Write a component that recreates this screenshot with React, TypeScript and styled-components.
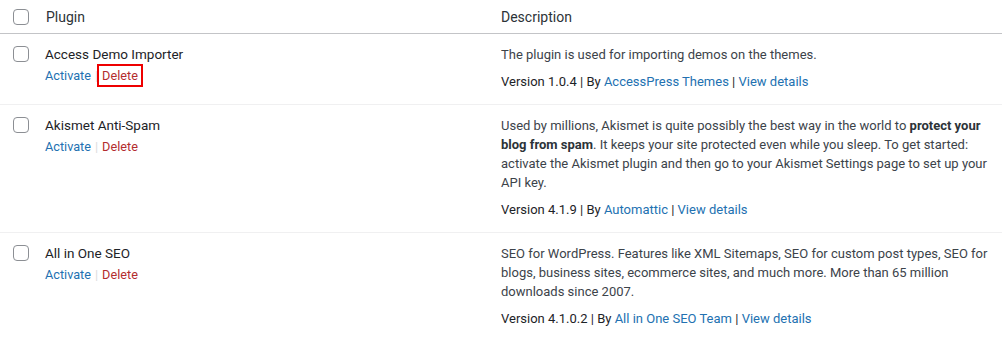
import React from "react";
import styled, { createGlobalStyle } from "styled-components";

const Global = createGlobalStyle`
  html, body { margin: 0; padding: 0; background: #fff; }
  body { font-family: Roboto, "Noto Sans", sans-serif; font-size: 13px; color: #3c434a; }
`;

const Table = styled.table`
  width: 1002px;
  border-collapse: collapse;
  table-layout: fixed;
`;

const HeadCell = styled.th<{ $w?: number }>`
  text-align: left;
  font-weight: 400;
  font-size: 14px;
  line-height: 17px;
  color: #2c3338;
  padding: 9px 10px 7px;
  border-bottom: 1px solid #c3c4c7;
  ${(p) => (p.$w ? `width: ${p.$w}px;` : "")}
`;

const CheckHead = styled.th`
  width: 16px;
  padding: 8px 7px 8px 13px;
  border-bottom: 1px solid #c3c4c7;
  text-align: left;
`;

const Row = styled.tr`
  border-bottom: 1px solid #f0f0f1;
`;

const CheckCell = styled.td`
  vertical-align: top;
  padding: 12px 7px 0 13px;
`;

const Box = styled.span`
  display: block;
  width: 14px;
  height: 14px;
  border: 1px solid #8c8f94;
  border-radius: 4px;
  background: #fff;
`;

const TitleCell = styled.td`
  vertical-align: top;
  padding: 10px 10px 13px 9px;
`;

const Title = styled.div`
  font-size: 13.5px;
  line-height: 21px;
  color: #1d2327;
`;

const Actions = styled.div`
  display: flex;
  align-items: center;
  font-size: 12.7px;
  line-height: 21px;
`;

const Sep = styled.span`
  color: #dcdcde;
  margin: 0 4px 0 4px;
`;

const ActionLink = styled.a<{ $danger?: boolean; $marked?: boolean }>`
  position: relative;
  color: ${(p) => (p.$danger ? "#b32d2e" : "#2271b1")};
  text-decoration: none;
  ${(p) =>
    p.$marked
      ? `&::after {
          content: "";
          position: absolute;
          top: -1px;
          bottom: -1px;
          left: -5px;
          right: -5px;
          border: 2px solid #ee0000;
          box-sizing: border-box;
        }
        &::before {
          content: "";
          position: absolute;
          top: 0; bottom: 0; left: -4px; width: 4px;
          background: #fff;
        }`
      : ""}
`;

const DescCell = styled.td`
  vertical-align: top;
  padding: 11px 10px 13px;
`;

const Para = styled.p`
  margin: 0 0 8px;
  line-height: 19px;
  color: #3c434a;
  strong { font-weight: 700; color: #2c3338; }
`;

const Meta = styled.div`
  line-height: 19px;
  color: #1d2327;
`;

const Link = styled.a`
  color: #2271b1;
  text-decoration: none;
`;

type Plugin = {
  name: string;
  desc: React.ReactNode;
  version: string;
  author: string;
  marked?: boolean;
};

const plugins: Plugin[] = [
  {
    name: "Access Demo Importer",
    desc: "The plugin is used for importing demos on the themes.",
    version: "1.0.4",
    author: "AccessPress Themes",
    marked: true,
  },
  {
    name: "Akismet Anti-Spam",
    desc: (
      <>
        Used by millions, Akismet is quite possibly the best way in the world to{" "}
        <strong>protect your blog from spam</strong>. It keeps your site protected even while you
        sleep. To get started: activate the Akismet plugin and then go to your Akismet Settings page
        to set up your API key.
      </>
    ),
    version: "4.1.9",
    author: "Automattic",
  },
  {
    name: "All in One SEO",
    desc: "SEO for WordPress. Features like XML Sitemaps, SEO for custom post types, SEO for blogs, business sites, ecommerce sites, and much more. More than 65 million downloads since 2007.",
    version: "4.1.0.2",
    author: "All in One SEO Team",
  },
];

export default function App() {
  return (
    <>
      <Global />
      <Table>
        <thead>
          <tr>
            <CheckHead>
              <Box />
            </CheckHead>
            <HeadCell $w={435}>Plugin</HeadCell>
            <HeadCell>Description</HeadCell>
          </tr>
        </thead>
        <tbody>
          {plugins.map((p) => (
            <Row key={p.name}>
              <CheckCell>
                <Box />
              </CheckCell>
              <TitleCell>
                <Title>{p.name}</Title>
                <Actions>
                  <ActionLink href="#">Activate</ActionLink>
                  <Sep>|</Sep>
                  <ActionLink href="#" $danger $marked={p.marked}>
                    Delete
                  </ActionLink>
                </Actions>
              </TitleCell>
              <DescCell>
                <Para>{p.desc}</Para>
                <Meta>
                  Version {p.version} | By <Link href="#">{p.author}</Link> |{" "}
                  <Link href="#">View details</Link>
                </Meta>
              </DescCell>
            </Row>
          ))}
        </tbody>
      </Table>
    </>
  );
}
